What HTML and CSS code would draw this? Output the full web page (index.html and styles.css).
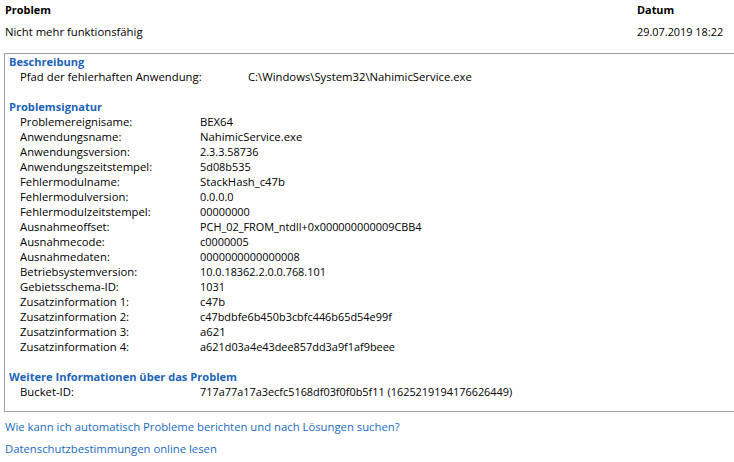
FILE: index.html
```html
<!DOCTYPE html>
<html lang="de">
<head>
<meta charset="utf-8">
<link rel="stylesheet" href="styles.css">
</head>
<body>
<div class="header">
  <div class="hrow">
    <div class="hcol1 bold">Problem</div>
    <div class="bold">Datum</div>
  </div>
  <div class="hrow">
    <div class="hcol1">Nicht mehr funktionsfähig</div>
    <div class="num">29.07.2019 18:22</div>
  </div>
</div>
<div class="box">
  <section class="sec">
    <h2 class="sec-title">Beschreibung</h2>
    <div class="row wide"><span class="lbl">Pfad der fehlerhaften Anwendung:</span><span>C:\Windows\System32\NahimicService.exe</span></div>
  </section>
  <section class="sec">
    <h2 class="sec-title">Problemsignatur</h2>
    <div class="row"><span class="lbl">Problemereignisame:</span><span>BEX64</span></div>
    <div class="row"><span class="lbl">Anwendungsname:</span><span>NahimicService.exe</span></div>
    <div class="row"><span class="lbl">Anwendungsversion:</span><span class="num">2.3.3.58736</span></div>
    <div class="row"><span class="lbl">Anwendungszeitstempel:</span><span class="num">5d08b535</span></div>
    <div class="row"><span class="lbl">Fehlermodulname:</span><span>StackHash_c47b</span></div>
    <div class="row"><span class="lbl">Fehlermodulversion:</span><span class="num">0.0.0.0</span></div>
    <div class="row"><span class="lbl">Fehlermodulzeitstempel:</span><span class="num">00000000</span></div>
    <div class="row"><span class="lbl">Ausnahmeoffset:</span><span class="num">PCH_02_FROM_ntdll+0x000000000009CBB4</span></div>
    <div class="row"><span class="lbl">Ausnahmecode:</span><span class="num">c0000005</span></div>
    <div class="row"><span class="lbl">Ausnahmedaten:</span><span class="num">0000000000000008</span></div>
    <div class="row"><span class="lbl">Betriebsystemversion:</span><span class="num">10.0.18362.2.0.0.768.101</span></div>
    <div class="row"><span class="lbl">Gebietsschema-ID:</span><span class="num">1031</span></div>
    <div class="row"><span class="lbl">Zusatzinformation 1:</span><span>c47b</span></div>
    <div class="row"><span class="lbl">Zusatzinformation 2:</span><span class="num">c47bdbfe6b450b3cbfc446b65d54e99f</span></div>
    <div class="row"><span class="lbl">Zusatzinformation 3:</span><span>a621</span></div>
    <div class="row"><span class="lbl">Zusatzinformation 4:</span><span class="num">a621d03a4e43dee857dd3a9f1af9beee</span></div>
  </section>
  <section class="sec">
    <h2 class="sec-title">Weitere Informationen über das Problem</h2>
    <div class="row"><span class="lbl">Bucket-ID:</span><span class="num">717a77a17a3ecfc5168df03f0f0b5f11 (1625219194176626449)</span></div>
  </section>
</div>
<div class="links">
  <a class="link" href="#">Wie kann ich automatisch Probleme berichten und nach Lösungen suchen?</a>
  <a class="link" href="#">Datenschutzbestimmungen online lesen</a>
</div>
</body>
</html>
```
FILE: styles.css
```css
html, body {
  margin: 0;
  padding: 0;
  background: #ffffff;
}
body {
  font-family: "Segoe UI", "Open Sans", "Noto Sans", sans-serif;
  font-size: 11.3px;
  line-height: 15px;
  color: #000000;
  width: 734px;
  height: 462px;
  overflow: hidden;
}
.bold { font-weight: 700; font-size: 10.9px; }
.num { font-size: 10.9px; }
.header {
  padding: 2px 0 0 5px;
  display: flex;
  flex-direction: column;
  gap: 7px;
}
.hrow {
  display: grid;
  grid-template-columns: 632px 1fr;
  height: 15px;
}
.box {
  margin: 14px 0 0 4px;
  border: 1px solid #a0a0a0;
  border-right: none;
  padding: 0 0 12px 4px;
  display: flex;
  flex-direction: column;
  gap: 15px;
}
.sec-title {
  margin: 0;
  font-size: 11.1px;
  font-weight: 700;
  color: #1c64b6;
  line-height: 15px;
}
.row {
  display: grid;
  grid-template-columns: 180px 1fr;
  padding-left: 11px;
  white-space: nowrap;
  height: 15px;
}
.row.wide {
  grid-template-columns: 228px 1fr;
}
.links {
  padding: 7px 0 0 5px;
  display: flex;
  flex-direction: column;
  gap: 7px;
}
.link {
  color: #1a6ac0;
  text-decoration: none;
  line-height: 15px;
  height: 15px;
}
```
